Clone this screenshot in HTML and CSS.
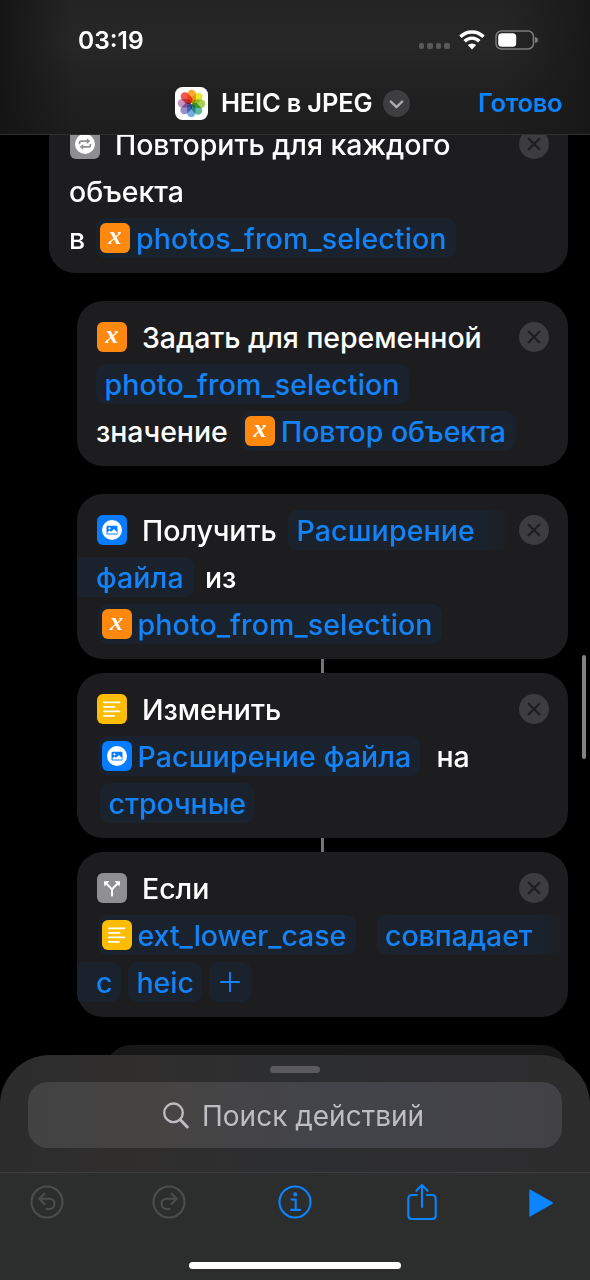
FILE: index.html
```
<!DOCTYPE html>
<html lang="ru">
<head>
<meta charset="utf-8">
<title>HEIC в JPEG</title>
<link rel="stylesheet" href="styles.css">
</head>
<body>
<svg class="defs" width="0" height="0">
  <symbol id="close" viewBox="0 0 30 30"><circle cx="15" cy="15" r="15" fill="#3d3d40"/><path d="M9.7 9.7l10.6 10.6M20.3 9.7L9.7 20.3" stroke="#1e1e20" stroke-width="2.3" stroke-linecap="round"/></symbol>
  <symbol id="text" viewBox="0 0 30 30"><rect width="30" height="30" rx="6" fill="#fdbd05"/><path d="M7 8.300h15.500M7 12.800h10.500M7 17.300h15.500M7 21.800h10" stroke="#fff" stroke-width="1.800" stroke-linecap="round"/></symbol>
  <symbol id="photo" viewBox="0 0 30 30"><rect width="30" height="30" rx="6" fill="#087cfe"/><circle cx="15" cy="15" r="10" fill="#fff"/><rect x="9.500" y="10.700" width="11" height="8.800" rx="1.200" fill="#087cfe"/><circle cx="12.500" cy="13.300" r="1.100" fill="#fff"/><path d="M10.500 18.500v-1.300l2-1.600 1.500 1.200 3-2.700 3 3v1.400z" fill="#fff"/></symbol>
  <symbol id="repeat" viewBox="0 0 30 30"><rect width="30" height="30" rx="6" fill="#8e8e93"/><circle cx="15" cy="15" r="10" fill="#fff"/><path d="M9.500 14.500v-.4a2 2 0 0 1 2-2h5.800M20.500 15.500v.4a2 2 0 0 1-2 2h-5.800" stroke="#8e8e93" stroke-width="1.700" fill="none" stroke-linecap="round"/><path d="M16.800 9.300v5.600l3.500-2.800zM13.200 15.100v5.600l-3.500-2.800z" fill="#8e8e93"/></symbol>
  <symbol id="branch" viewBox="0 0 30 30"><rect width="30" height="30" rx="6" fill="#8e8e93"/><path d="M15 22.500v-6.200L9.500 10.600M15 16.300l5.500-5.700" stroke="#fff" stroke-width="2" fill="none" stroke-linecap="round"/><path d="M6.900 8.200h5.600l-5.100 5.300zM23.100 8.200h-5.600l5.100 5.300z" fill="#fff"/></symbol>
</svg>
<div class="phone">
  <header class="header">
    <div class="status">
      <span class="time">03:19</span>
      <span class="dots"><i></i><i></i><i></i><i></i></span>
      <svg class="wifi" width="26" height="20" viewBox="0 0 26 20"><path d="M1.500 6.800a16.300 16.300 0 0 1 23 0" stroke="#fff" stroke-width="3.600" fill="none"/><path d="M5.700 11.200a10.300 10.300 0 0 1 14.600 0" stroke="#fff" stroke-width="3.400" fill="none"/><path d="M13 19.400l-4.200-4.300a6 6 0 0 1 8.400 0z" fill="#fff"/></svg>
      <svg class="battery" width="44" height="20" viewBox="0 0 44 20"><rect x="1" y="1" width="37.500" height="18" rx="5.500" fill="none" stroke="#7b7b7c" stroke-width="1.500"/><rect x="3.200" y="3.200" width="18" height="13.600" rx="3.600" fill="#fff"/><path d="M40 7v6q3-.6 3-3t-3-3z" fill="#7b7b7c"/></svg>
    </div>
    <div class="titlebar">
      <svg class="photos" width="33" height="33" viewBox="0 0 33 33"><rect width="33" height="33" rx="7.500" fill="#fff"/>
        <g class="petals"><rect x="12.500" y="2.700" width="8.400" height="13.300" rx="4.200" fill="#ff9d1c"/><rect x="12.500" y="2.700" width="8.400" height="13.300" rx="4.200" fill="#e3e31c" transform="rotate(45 16.500 16.500)"/><rect x="12.500" y="2.700" width="8.400" height="13.300" rx="4.200" fill="#9bcb45" transform="rotate(90 16.500 16.500)"/><rect x="12.500" y="2.700" width="8.400" height="13.300" rx="4.200" fill="#51b492" transform="rotate(135 16.500 16.500)"/><rect x="12.500" y="2.700" width="8.400" height="13.300" rx="4.200" fill="#65a6df" transform="rotate(180 16.500 16.500)"/><rect x="12.500" y="2.700" width="8.400" height="13.300" rx="4.200" fill="#8a83c5" transform="rotate(225 16.500 16.500)"/><rect x="12.500" y="2.700" width="8.400" height="13.300" rx="4.200" fill="#c585bd" transform="rotate(270 16.500 16.500)"/><rect x="12.500" y="2.700" width="8.400" height="13.300" rx="4.200" fill="#f2463a" transform="rotate(315 16.500 16.500)"/></g></svg>
      <h1 class="title">HEIC в JPEG</h1>
      <svg class="chevron" width="27" height="27" viewBox="0 0 27 27"><circle cx="13.500" cy="13.500" r="13.500" fill="#3e3e41"/><path d="M7.800 11.500l5.700 5.700 5.700-5.700" fill="none" stroke="#aeaeb2" stroke-width="2.400" stroke-linecap="round" stroke-linejoin="round"/></svg>
      <span class="done">Готово</span>
    </div>
  </header>

  <main class="list">
    <section class="card card-outer">
      <div class="row"><svg class="icon"><use href="#repeat"/></svg><span class="label head">Повторить для каждого</span><svg class="icon close"><use href="#close"/></svg></div>
      <div class="row"><span class="label">объекта</span></div>
      <div class="row"><span class="label w-in">в</span><span class="chip w-photos"><span class="icon var">x</span><span class="label name">photos_from_selection</span></span></div>
    </section>
    <section class="card">
      <div class="row"><span class="icon var">x</span><span class="label head">Задать для переменной</span><svg class="icon close"><use href="#close"/></svg></div>
      <div class="row"><span class="chip plain w-photo"><span class="label name">photo_from_selection</span></span></div>
      <div class="row"><span class="label w-value">значение</span><span class="chip w-item"><span class="icon var">x</span><span class="label">Повтор объекта</span></span></div>
    </section>
    <section class="card joined">
      <div class="row"><svg class="icon"><use href="#photo"/></svg><span class="label head w-get">Получить</span><span class="chip plain open-right w-ext"><span class="label wide">Расширение</span></span><svg class="icon close"><use href="#close"/></svg></div>
      <div class="row"><span class="chip open-left w-file"><span class="label wide">файла</span></span><span class="label after">из</span></div>
      <div class="row"><span class="chip inset w-from"><span class="icon var">x</span><span class="label name">photo_from_selection</span></span></div>
    </section>
    <section class="card joined">
      <div class="row"><svg class="icon"><use href="#text"/></svg><span class="label head">Изменить</span><svg class="icon close"><use href="#close"/></svg></div>
      <div class="row"><span class="chip inset w-extfile"><svg class="icon"><use href="#photo"/></svg><span class="label wide">Расширение файла</span></span><span class="label to">на</span></div>
      <div class="row"><span class="chip plain w-lower"><span class="label">строчные</span></span></div>
    </section>
    <section class="card">
      <div class="row"><svg class="icon"><use href="#branch"/></svg><span class="label head">Если</span><svg class="icon close"><use href="#close"/></svg></div>
      <div class="row"><span class="chip inset w-case"><svg class="icon"><use href="#text"/></svg><span class="label">ext_lower_case</span></span><span class="chip plain open-right w-match"><span class="label">совпадает</span></span></div>
      <div class="row"><span class="chip open-left w-with"><span class="label">с</span></span><span class="chip plain w-heic"><span class="label">heic</span></span><span class="chip w-plus"><svg width="20" height="20" viewBox="0 0 20 20"><path d="M10 .8v18.400M.8 10h18.400" stroke="#1483f8" stroke-width="1.900" stroke-linecap="round"/></svg></span></div>
    </section>
    <section class="card card-inner"></section>
    <i class="scrollbar"></i>
  </main>

  <footer class="sheet">
    <i class="grabber"></i>
    <div class="search"><svg width="26" height="27" viewBox="0 0 26 27"><circle cx="10.500" cy="10.800" r="9.300" fill="none" stroke="#bdbdc2" stroke-width="2.300"/><path d="M17.300 17.700l7 7.200" stroke="#bdbdc2" stroke-width="2.900" stroke-linecap="round"/></svg><span class="placeholder">Поиск действий</span></div>
    <nav class="toolbar">
      <svg width="34" height="34" viewBox="0 0 34 34" class="tool off"><circle cx="17" cy="17" r="15.500"/><path d="M14.500 8.700L9.200 13.800l5.300 5.100M9.600 13.800h9.800a5 5 0 0 1 0 10.200h-3"/></svg>
      <svg width="34" height="34" viewBox="0 0 34 34" class="tool off redo"><circle cx="17" cy="17" r="15.500"/><path d="M19.500 8.700l5.300 5.100-5.300 5.100M24.400 13.800h-9.800a5 5 0 0 0 0 10.200h3"/></svg>
      <svg width="34" height="34" viewBox="0 0 34 34" class="tool info"><circle cx="17" cy="17" r="15.500"/><path d="M13.500 14.500h4.200v10.300M13 24.900h9"/><circle cx="17.200" cy="9.400" r="1" class="solid"/></svg>
      <svg width="30" height="38" viewBox="0 0 30 38" class="tool share"><path d="M10 12H4.800Q1.300 12 1.300 15.500v17q0 3.500 3.500 3.500h20.400q3.500 0 3.500-3.500v-17q0-3.500-3.500-3.500H20M15 24V2.300M9.300 7.800L15 2l5.700 5.800"/></svg>
      <svg width="26" height="30" viewBox="0 0 26 30" class="play"><path d="M1.300 2.500v25q.1 1.400 1.400.7L24.300 16q1.300-1 0-2L2.700 1.800q-1.300-.7-1.400.7z"/></svg>
    </nav>
    <i class="home"></i>
  </footer>
</div>
</body>
</html>
```
FILE: styles.css
```
* { box-sizing: border-box; }
body { margin: 0; background: #000; font-family: Inter, "Noto Sans", sans-serif; color: #fff; }
.defs { display: none; }
.phone { width: 590px; height: 1280px; display: flex; flex-direction: column; overflow: hidden; background: #000; }
i { display: block; }

.header { height: 135px; flex: none; background: linear-gradient(90deg, #151515 0, #1b1b1b00 75px, #1b1b1b00 500px, #181818 590px), linear-gradient(#242425, #272727 45px, #212122 85px, #1d1d1e); border-bottom: 1px solid #303032; }
.status { height: 80px; display: flex; align-items: center; padding-left: 78px; }
.time { width: 341px; font-size: 24.500px; font-weight: 600; letter-spacing: 0; }
.dots { display: flex; gap: 3px; padding-top: 12px; width: 39px; }
.dots i { width: 5.400px; height: 5.400px; border-radius: 2px; background: #59595a; }
.wifi { margin-left: 1px; }
.battery { margin-left: 10px; }
.titlebar { display: flex; align-items: center; height: 47px; padding-left: 175px; }
.petals { isolation: isolate; }
.petals rect { mix-blend-mode: multiply; opacity: .9; }
.title { margin: 0 0 0 13px; padding-bottom: 2px; width: 151px; font-size: 25.500px; font-weight: 570; letter-spacing: -.2px; white-space: nowrap; }
.chevron { margin-left: 11px; }
.done { margin-left: 68px; padding-bottom: 2px; color: #0a84ff; font-size: 25.500px; font-weight: 570; letter-spacing: -.3px; }

.list { flex: none; height: 940px; overflow: hidden; position: relative; display: flex; flex-direction: column; }
.card { flex: none; position: relative; margin: 0 22px 28px 77px; height: 165px; padding: 12px 19px; background: #1d1d1f; border-radius: 26px; }
.card-outer { margin-left: 49px; margin-top: -27px; padding-left: 20px; }
.card-inner { margin-left: 105px; background: #171718; }
.joined { margin-bottom: 14px; }
.joined::after { content: ""; position: absolute; left: 244px; top: 165px; width: 2.500px; height: 14px; background: #737378; }
.row { height: 47px; display: flex; align-items: center; }
.icon { flex: none; display: block; width: 30px; height: 30px; margin-left: 1px; }
.close { margin-left: auto; margin-right: 0; }
.var { border-radius: 6px; background: #ff890f; color: #fff; text-align: center; font: italic bold 26px/26px "Liberation Serif", serif; }
.label { font-size: 28.500px; font-weight: 450; line-height: 40px; letter-spacing: -.05px; padding-top: 3px; white-space: nowrap; }
.name { letter-spacing: .13px; }
.wide { letter-spacing: .13px; }
.head { margin-left: 15px; }
.chip { flex: none; display: flex; align-items: center; height: 40px; border-radius: 9px; background: #1a222d; color: #1483f8; }
.chip .icon { margin: 0 6px 0 4px; }
.plain { padding-left: 8.500px; }
.inset { margin-left: 1.500px; }
.open-right { border-radius: 9px 0 0 9px; background: linear-gradient(90deg, #1a222d 88%, #1d1d1f); }
.open-left { margin-left: -19px; padding-left: 19px; border-radius: 0 9px 9px 0; }
.w-in { width: 27px; }
.w-photos { width: 360px; }
.w-photo { width: 313px; }
.w-value { width: 145px; }
.w-item { width: 274px; }
.w-get { width: 146px; }
.w-ext { width: 222px; }
.w-file { width: 117px; }
.after { margin-left: 11px; }
.w-from { width: 344px; }
.w-extfile { width: 322px; }
.to { margin-left: 17px; }
.w-lower { width: 154px; margin-left: 4px; }
.w-case { width: 258px; }
.w-match { width: 186px; margin-left: 21px; }
.w-with { width: 44px; border-bottom-left-radius: 3px 11px; }
.w-heic { width: 74px; margin-left: 7px; }
.w-plus { width: 42px; margin-left: 7px; justify-content: center; }
.scrollbar { position: absolute; right: 4px; top: 520px; width: 4px; height: 104px; border-radius: 2px; background: #828282; }

.sheet { position: relative; flex: none; height: 225px; margin-top: -20px; padding: 11px 0 0; border-radius: 50px 50px 0 0; background: linear-gradient(90deg, #2c2c2d, #302e2d 22%, #2d2e31 50%, #2d2d2f 75%, #2c2c2d); }
.grabber { width: 50px; height: 7px; margin: 0 auto; border-radius: 4px; background: #5b5b5d; }
.search { height: 66px; margin: 9px 28px 0; display: flex; align-items: center; padding-left: 135px; border-radius: 20px; background: linear-gradient(90deg, #424242, #464443 25%, #43444a 55%, #424246); }
.placeholder { margin-left: 13px; padding-top: 2px; color: #bdbdc2; font-size: 28px; letter-spacing: 0; }
.toolbar { height: 60px; margin-top: 24px; padding: 0 0 2px 30px; border-top: 1px solid #404042; background: #2c2d2d; display: flex; align-items: center; }
.tool { fill: none; stroke: #0a84ff; stroke-width: 2.100; stroke-linecap: round; stroke-linejoin: round; }
.off { stroke: #4d4d4e; }
.redo { margin-left: 88px; }
.info { margin-left: 92px; }
.share { margin-left: 95px; }
.solid { fill: #0a84ff; }
.play { fill: #0a84ff; margin: 2px 0 0 91px; }
.home { position: absolute; left: 189px; bottom: 11px; width: 212px; height: 7px; border-radius: 4px; background: #fff; }
.sheet::after { content: ""; display: block; height: 48px; background: #2c2d2d; }
```
